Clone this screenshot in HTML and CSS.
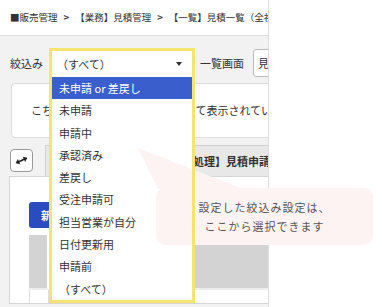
FILE: index.html
```html
<!DOCTYPE html>
<html lang="ja">
<head>
  <meta charset="UTF-8" />
  <meta name="viewport" content="width=device-width, initial-scale=1.0"/>
  <title>見積一覧 - 絞込み</title>
  <link rel="stylesheet" href="styles.css">
</head>
<body>

  <div class="app">
    <div class="screen">
      <div class="breadcrumb">■販売管理<span class="sep">&gt;</span>【業務】見積管理<span class="sep">&gt;</span>【一覧】見積一覧（全社）</div>

      <div class="filter-row">
        <span class="label">絞込み</span>
        <div class="filter-select">
          <div class="select-value">（すべて）<span class="caret"></span></div>
          <ul class="options">
            <li class="active">未申請 or 差戻し</li>
            <li>未申請</li>
            <li>申請中</li>
            <li>承認済み</li>
            <li>差戻し</li>
            <li>受注申請可</li>
            <li>担当営業が自分</li>
            <li>日付更新用</li>
            <li>申請前</li>
            <li>（すべて）</li>
          </ul>
          <div class="highlight"></div>
        </div>
        <span class="label">一覧画面</span>
        <div class="view-select">見積一覧</div>
      </div>

      <div class="notice">こちらの一覧は絞込み条件に沿って表示されています。</div>

      <div class="toolbar">
        <button class="swap-btn" type="button">
          <svg width="13" height="11" viewBox="0 0 13 11">
            <g transform="rotate(-25 6.5 5.5)">
              <line x1="3" y1="5.5" x2="10" y2="5.5" stroke="#222" stroke-width="1.7"/>
              <polygon points="0,5.5 3.8,2.6 3.8,8.4" fill="#222"/>
              <polygon points="13,5.5 9.2,2.6 9.2,8.4" fill="#222"/>
            </g>
          </svg>
        </button>
        <div class="tabs">
          <div class="tab">【一覧】見積一覧</div>
          <div class="tab">【処理】見積申請一覧</div>
        </div>
      </div>

      <div class="panel">
        <button class="new-btn" type="button">新規作成</button>
        <table class="grid">
          <tr class="head">
            <th class="check"></th>
            <th class="wide"></th>
          </tr>
          <tr class="row">
            <td class="check"></td>
            <td class="wide"></td>
          </tr>
        </table>
      </div>
    </div>
  </div>

  <div class="callout">
    <svg class="callout-tail" width="105" height="41" viewBox="0 0 105 41">
      <polygon points="0,0 105,41 20,41" fill="#fef3f3"/>
    </svg>
    <span>設定した絞込み設定は、</span>
    <span>ここから選択できます</span>
  </div>

</body>
</html>
```

FILE: styles.css
```css
body {
  margin: 0;
  padding: 0;
  font-family: "Noto Sans CJK JP", "Noto Sans", sans-serif;
  background: #fff;
  color: #333;
}

.app {
  width: 268px;
  height: 307px;
  border-right: 1px solid #dcdcdc;
  background: #f2f2f2;
  overflow: hidden;
}

.screen {
  width: 430px;
}

.breadcrumb {
  height: 35px;
  line-height: 35px;
  padding-left: 10px;
  background: #fff;
  border-bottom: 1px solid #dcdcdc;
  font-size: 9.5px;
  white-space: nowrap;
}

.breadcrumb .sep {
  margin: 0 6px;
  font-weight: bold;
}

.filter-row {
  display: flex;
  align-items: center;
  height: 28px;
  padding: 13px 0 0 10px;
}

.label {
  font-size: 11px;
  white-space: nowrap;
}

.filter-select {
  position: relative;
  align-self: flex-end;
  width: 140px;
  height: 26px;
  margin: 0 8px 0 9px;
  background: #fff;
}

.select-value {
  padding-left: 5px;
  line-height: 26px;
  font-size: 11px;
}

.caret {
  position: absolute;
  right: 10px;
  top: 11px;
  border-left: 3px solid transparent;
  border-right: 3px solid transparent;
  border-top: 4px solid #333;
}

.options {
  position: absolute;
  top: 26px;
  left: 0;
  width: 140px;
  margin: 0;
  padding: 0;
  list-style: none;
  background: #fff;
  z-index: 2;
}

.options li {
  height: 22.3px;
  line-height: 22.3px;
  padding-left: 7px;
  font-size: 11px;
  color: #333;
  white-space: nowrap;
}

.options li.active {
  background: #3a5fcd;
  color: #fff;
}

.highlight {
  position: absolute;
  top: -3px;
  left: -3px;
  width: 146px;
  height: 255px;
  box-sizing: border-box;
  border: 3px solid #f7e36d;
  z-index: 4;
  pointer-events: none;
}

.view-select {
  width: 150px;
  height: 28px;
  box-sizing: border-box;
  margin-left: 9px;
  padding-left: 4px;
  border: 1px solid #bbb;
  border-radius: 3px;
  background: #fff;
  line-height: 26px;
  font-size: 11px;
}

.notice {
  width: 420px;
  height: 55px;
  box-sizing: border-box;
  margin: 6px 0 0 11px;
  padding-left: 19px;
  border: 1px solid #dcdcdc;
  border-radius: 4px;
  background: #fff;
  line-height: 53px;
  font-size: 11px;
  white-space: nowrap;
}

.toolbar {
  display: flex;
  align-items: flex-start;
  height: 31px;
  padding: 7px 0 0 10px;
}

.swap-btn {
  width: 23px;
  height: 23px;
  margin-top: 4px;
  padding: 0;
  display: flex;
  align-items: center;
  justify-content: center;
  background: #fff;
  border: 1px solid #999;
  border-radius: 4px;
}

.tabs {
  display: flex;
  margin-left: 12px;
}

.tab {
  height: 31px;
  box-sizing: border-box;
  padding: 0 7px;
  background: #e8e8e8;
  border: 1px solid #d0d0d0;
  border-bottom: none;
  line-height: 30px;
  font-size: 11px;
  font-weight: bold;
  white-space: nowrap;
}

.tab:first-child {
  width: 130px;
}

.tab + .tab {
  margin-left: -1px;
}

.panel {
  width: 400px;
  height: 128px;
  box-sizing: border-box;
  margin-left: 9px;
  padding: 25px 0 0 19px;
  border: 1px solid #d6d6d6;
  background: #fff;
  overflow: hidden;
}

.new-btn {
  display: block;
  height: 26px;
  padding: 0 12px;
  border: none;
  border-radius: 3px;
  background: #2b4cc0;
  color: #fff;
  font-family: inherit;
  font-size: 11px;
  font-weight: bold;
}

.grid {
  margin-top: 7px;
  border-collapse: separate;
  border-spacing: 0;
}

.grid th,
.grid td {
  padding: 0;
}

.grid .head th {
  height: 53px;
  background: #d3d3d3;
  border-right: 2px solid #fff;
  border-bottom: 2px solid #eee;
}

.grid .row td {
  height: 14px;
  border-right: 1px solid #ddd;
  border-left: 1px solid #ddd;
}

.grid .check {
  width: 18px;
}

.grid .wide {
  width: 320px;
}

.callout {
  position: absolute;
  left: 156px;
  top: 188px;
  width: 217px;
  height: 57px;
  border-radius: 9px;
  background: #fef3f3;
  z-index: 3;
  display: flex;
  flex-direction: column;
  align-items: center;
  justify-content: center;
  font-size: 11px;
  letter-spacing: 1px;
  line-height: 19px;
  color: #555;
}

.callout-tail {
  position: absolute;
  left: -18px;
  top: -40px;
}
```
